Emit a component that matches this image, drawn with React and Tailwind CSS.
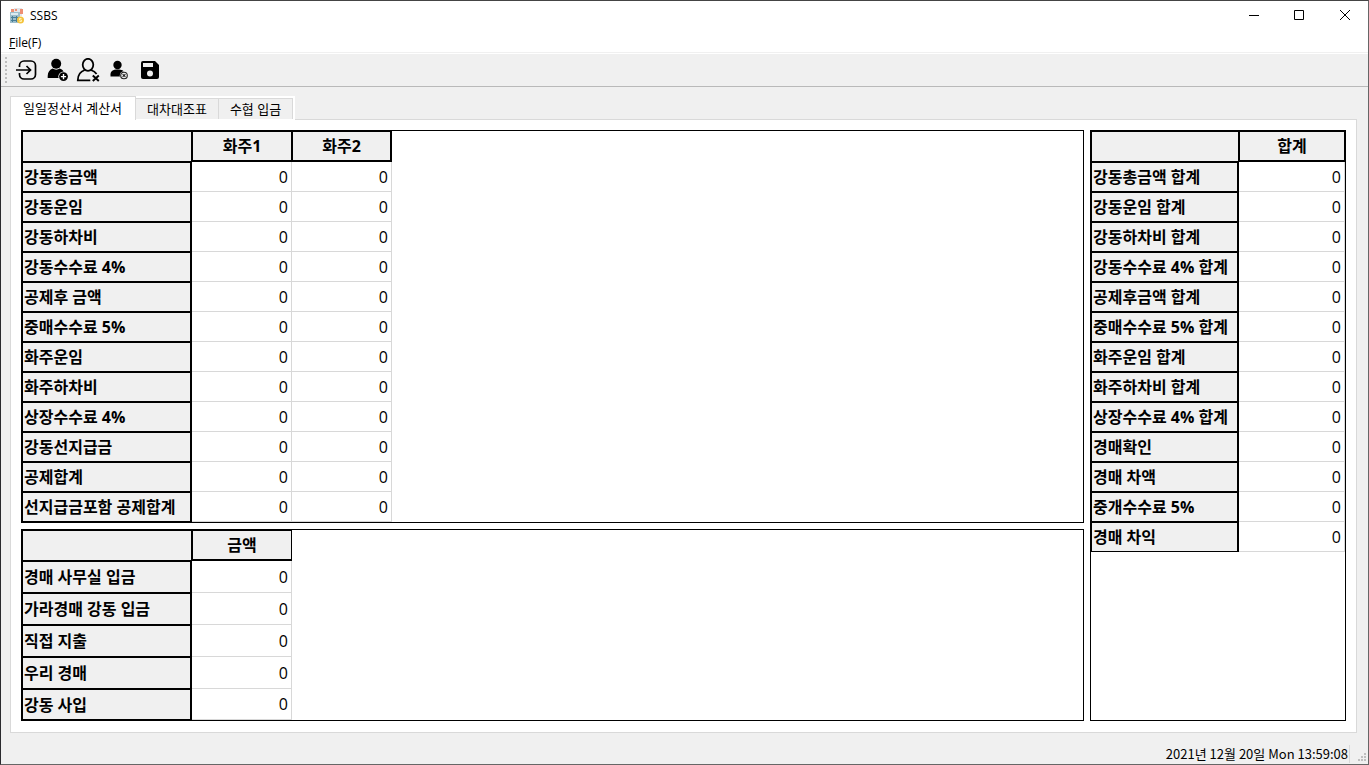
import { useState } from "react"
import clsx from "clsx"

const ownerRows = [
  "강동총금액",
  "강동운임",
  "강동하차비",
  "강동수수료 4%",
  "공제후 금액",
  "중매수수료 5%",
  "화주운임",
  "화주하차비",
  "상장수수료 4%",
  "강동선지급금",
  "공제합계",
  "선지급금포함 공제합계",
]

const depositRows = ["경매 사무실 입금", "가라경매 강동 입금", "직접 지출", "우리 경매", "강동 사입"]

const totalRows = [
  "강동총금액 합계",
  "강동운임 합계",
  "강동하차비 합계",
  "강동수수료 4% 합계",
  "공제후금액 합계",
  "중매수수료 5% 합계",
  "화주운임 합계",
  "화주하차비 합계",
  "상장수수료 4% 합계",
  "경매확인",
  "경매 차액",
  "중개수수료 5%",
  "경매 차익",
]

const tabs = ["일일정산서 계산서", "대차대조표", "수협 입금"]

function AppIcon() {
  return (
    <svg width="16" height="16" viewBox="0 0 16 16">
      <path d="M5 0h8v8H5z" fill="#e3e6ea" />
      <path d="M2 1h3v3H2zM6 1h2v2H6zM11 1h3v5h-3z" fill="#ee8f73" />
      <path d="M1 4h10v11H1z" fill="#9dbdca" />
      <path d="M2 5h7v2H2z" fill="#dcebf0" />
      <path d="M3.500 8v6M7.500 8v6M2 9.500h8M2 12.500h8" stroke="#487e96" />
      <circle cx="11.500" cy="12" r="3.500" fill="#f4c33d" />
      <path d="M12.500 10.500h-2v1.500h2v1.500h-2" stroke="#fff0b4" fill="none" />
    </svg>
  )
}

function LoginIcon() {
  return (
    <svg width="24" height="24" viewBox="0 0 24 24" fill="none" stroke="#000" strokeWidth="1.700">
      <path d="M5.500 9V7.500A4.500 4.500 0 0 1 10 3h7A4.500 4.500 0 0 1 21.500 7.500v9A4.500 4.500 0 0 1 17 21h-7a4.500 4.500 0 0 1-4.500-4.500V15" />
      <path d="M2 12h14.500M12.500 8l4 4-4 4" />
    </svg>
  )
}

function UserAddIcon() {
  return (
    <svg width="24" height="24" viewBox="0 0 24 24">
      <circle cx="11.200" cy="5.800" r="5" fill="#000" />
      <path d="M2.700 20v-2c0-4 2-6.500 5-7.500 2 1.500 5 1.500 7 0 2.500.8 4 2.500 4.500 5V20z" fill="#000" />
      <circle cx="18.500" cy="18.600" r="5.200" fill="#efefef" />
      <circle cx="18.500" cy="18.600" r="4.400" fill="#000" />
      <path d="M18.500 16v5.200M15.900 18.600h5.200" stroke="#fff" strokeWidth="1.400" />
    </svg>
  )
}

function UserRemoveIcon() {
  return (
    <svg width="24" height="24" viewBox="0 0 24 24" fill="none" stroke="#000" strokeWidth="1.800">
      <ellipse cx="12" cy="6.800" rx="5.300" ry="6" />
      <path d="M8.800 12C4.300 13.500 1.800 16.500 1.800 22.300H14.300M14.800 12c2.500.8 4.500 2 5.800 4" />
      <path d="M16.800 17.500l6 5.500M22.800 17.500l-6 5.500" strokeWidth="2" />
    </svg>
  )
}

function UserCancelIcon() {
  return (
    <svg width="24" height="24" viewBox="0 0 24 24">
      <circle cx="10.500" cy="7" r="4.200" fill="#000" />
      <path d="M3.500 18.500v-2.300c0-3 2.300-4.700 7-4.700s6 1.200 6.800 3L14 18.500z" fill="#000" />
      <circle cx="17" cy="17.500" r="4.200" fill="#efefef" />
      <circle cx="17" cy="17.500" r="3.300" fill="#efefef" stroke="#222" strokeWidth="1.100" />
      <path d="M15.600 16.100l2.800 2.800M18.400 16.100l-2.800 2.800" stroke="#222" strokeWidth="1.100" />
    </svg>
  )
}

function SaveIcon() {
  return (
    <svg width="24" height="24" viewBox="0 0 24 24">
      <path d="M5 3h12l4 4v12a2 2 0 0 1-2 2H5a2 2 0 0 1-2-2V5a2 2 0 0 1 2-2z" fill="#000" />
      <path d="M5 5h10v4H5z" fill="#efefef" />
      <circle cx="12" cy="15.500" r="3" fill="#efefef" />
    </svg>
  )
}

const tools = [
  { label: "로그인", Icon: LoginIcon },
  { label: "화주 추가", Icon: UserAddIcon },
  { label: "화주 삭제", Icon: UserRemoveIcon },
  { label: "화주 취소", Icon: UserCancelIcon },
  { label: "저장", Icon: SaveIcon },
]

function SheetTable({ columns, rows, headWidth, colWidth, tall }) {
  return (
    <table className="w-px table-fixed border-separate border-spacing-0 text-base leading-5">
      <colgroup>
        <col className={headWidth} />
        {columns.map(c => (
          <col key={c} className={colWidth} />
        ))}
      </colgroup>
      <thead>
        <tr>
          <td className="h-[31px] border border-black bg-[#f0f0f0] p-0"></td>
          {columns.map((c, i) => (
            <th
              key={c}
              scope="col"
              className={clsx(
                "h-[31px] border border-b-2 border-black bg-[#f0f0f0] p-0 text-center font-bold",
                i > 0 && i === columns.length - 1 && "border-r-2"
              )}
            >
              {c}
            </th>
          ))}
        </tr>
      </thead>
      <tbody>
        {rows.map((r, i) => (
          <tr key={r}>
            <th
              scope="row"
              className={clsx(
                "border border-r-2 border-black bg-[#f0f0f0] py-0 pr-0 pl-px text-left font-bold whitespace-nowrap",
                !tall && "h-[30px]",
                tall && (i === rows.length - 1 ? "h-[31px]" : "h-8")
              )}
            >
              {r}
            </th>
            {columns.map(c => (
              <td key={c} className="border-r border-b border-[#d8d8d8] py-0 pr-[3px] pl-0 text-right">
                0
              </td>
            ))}
          </tr>
        ))}
      </tbody>
    </table>
  )
}

function App() {
  const [active, setActive] = useState(0)

  return (
    <div className="flex h-screen flex-col overflow-hidden border border-[#666] border-t-[#444] border-l-[#2a2a2e] bg-[#f0f0f0] font-['Open_Sans','Noto_Sans_CJK_KR',sans-serif] text-black">
      <header className="flex h-[30px] shrink-0 items-center bg-white pl-2">
        <AppIcon />
        <h1 className="ml-[5px] flex-1 text-xs">SSBS</h1>
        <button aria-label="최소화" className="flex h-full w-[45px] items-center justify-center pb-0.5">
          <svg width="10" height="10" stroke="#000"><path d="M0 5.500h10" /></svg>
        </button>
        <button aria-label="최대화" className="flex h-full w-[45px] items-center justify-center pb-0.5">
          <svg width="10" height="10" stroke="#000" fill="none"><path d="M.5.5h9v9h-9z" /></svg>
        </button>
        <button aria-label="닫기" className="flex h-full w-[47px] items-center justify-center pb-0.5 pl-px">
          <svg width="10" height="10" stroke="#000"><path d="M0 0l10 10M10 0L0 10" /></svg>
        </button>
      </header>

      <nav className="flex h-[21px] shrink-0 items-end bg-white pl-2 text-xs leading-[18px]">
        <button><span className="underline">F</span>ile(F)</button>
      </nav>

      <div className="flex h-[35px] shrink-0 items-center border-t border-b border-t-[#f0f0f0] border-b-[#b9b9b9] pl-1 shadow-[inset_0_1px_0_#fff]">
        <svg width="2" height="26" className="mr-[3px]" fill="#bdbdbd">
          {[0, 4, 8, 12, 16, 20, 24].map(y => (
            <rect key={y} y={y} width="2" height="2" />
          ))}
        </svg>
        <div className="flex">
          {tools.map(({ label, Icon }) => (
            <button key={label} aria-label={label} className="flex h-8 w-[31px] items-center justify-center">
              <Icon />
            </button>
          ))}
        </div>
      </div>

      <main className="flex min-h-0 flex-1 flex-col pt-[9px] pr-[11px] pl-[9px]">
        <div role="tablist" className="z-10 -mb-px flex h-6 w-fit shrink-0 bg-white pr-0.5 text-[13px] leading-5">
          {tabs.map((t, i) => (
            <button
              key={t}
              role="tab"
              aria-selected={active === i}
              onClick={() => setActive(i)}
              className={clsx(
                "border-t border-r border-[#d9d9d9]",
                active === i
                  ? "h-6 border-l bg-white pr-[13px] pb-0.5 pl-3"
                  : "mt-0.5 h-[21px] bg-[#f0f0f0] px-[11px] pb-px"
              )}
            >
              {t}
            </button>
          ))}
        </div>

        <section className="flex min-h-0 flex-1 gap-1.5 border border-[#d9d9d9] bg-white px-2.5 pt-2.5 pb-[11px]">
          <div className="flex min-w-0 flex-1 flex-col gap-1.5">
            <div className="shrink-0 border border-black">
              <SheetTable columns={["화주1", "화주2"]} rows={ownerRows} headWidth="w-[170px]" colWidth="w-[100px]" />
            </div>
            <div className="min-h-0 flex-1 overflow-hidden border border-black">
              <SheetTable columns={["금액"]} rows={depositRows} headWidth="w-[170px]" colWidth="w-[100px]" tall />
            </div>
          </div>
          <div className="w-64 shrink-0 overflow-hidden border border-black">
            <SheetTable columns={["합계"]} rows={totalRows} headWidth="w-[148px]" colWidth="w-[106px]" />
          </div>
        </section>
      </main>

      <footer className="flex h-[31px] shrink-0 items-end justify-end pb-px text-[13px]">
        <time className="border-r border-[#d9d9d9] pr-px font-['Noto_Sans_CJK_KR',sans-serif] leading-[18px]">
          2021년 12월 20일 Mon 13:59:08
        </time>
        <svg width="18" height="12" fill="#bfbfbf">
          <path d="M14 2h2v2h-2zM11 5h2v2h-2zM14 5h2v2h-2zM8 8h2v2H8zM11 8h2v2h-2zM14 8h2v2h-2z" />
        </svg>
      </footer>
    </div>
  )
}

export default App
